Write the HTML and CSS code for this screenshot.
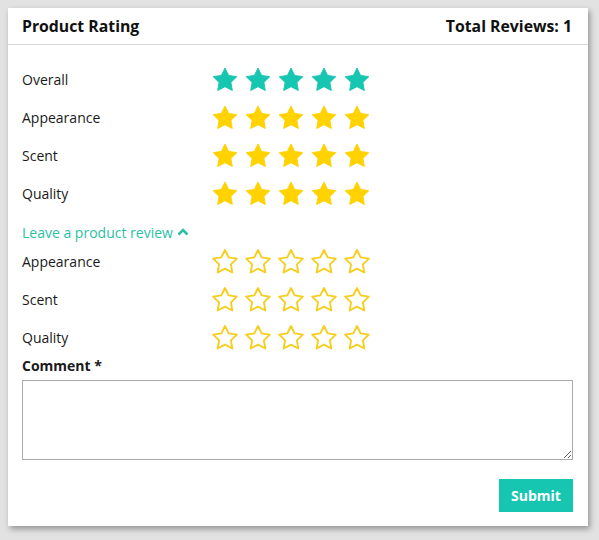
FILE: index.html
```html
<!DOCTYPE html>
<html>
<head>
	<title>Product Rating</title>
	<link rel="stylesheet" href="styles.css">
</head>
<body>
	<svg class="defs" width="0" height="0">
		<symbol id="star" viewBox="1 1.2 22 21">
			<polygon points="12,2 15.09,8.26 22,9.27 17,14.14 18.18,21.02 12,17.77 5.82,21.02 7,14.14 2,9.27 8.91,8.26" />
		</symbol>
	</svg>

	<div class="card">
		<div class="card-header">
			<span>Product Rating</span>
			<span>Total Reviews: 1</span>
		</div>

		<div class="card-body">
			<!-- current ratings -->
			<div class="rating-row">
				<span class="label">Overall</span>
				<span class="stars overall">
					<svg><use href="#star"/></svg><svg><use href="#star"/></svg><svg><use href="#star"/></svg><svg><use href="#star"/></svg><svg><use href="#star"/></svg>
				</span>
			</div>
			<div class="rating-row">
				<span class="label">Appearance</span>
				<span class="stars filled">
					<svg><use href="#star"/></svg><svg><use href="#star"/></svg><svg><use href="#star"/></svg><svg><use href="#star"/></svg><svg><use href="#star"/></svg>
				</span>
			</div>
			<div class="rating-row">
				<span class="label">Scent</span>
				<span class="stars filled">
					<svg><use href="#star"/></svg><svg><use href="#star"/></svg><svg><use href="#star"/></svg><svg><use href="#star"/></svg><svg><use href="#star"/></svg>
				</span>
			</div>
			<div class="rating-row">
				<span class="label">Quality</span>
				<span class="stars filled">
					<svg><use href="#star"/></svg><svg><use href="#star"/></svg><svg><use href="#star"/></svg><svg><use href="#star"/></svg><svg><use href="#star"/></svg>
				</span>
			</div>

			<a class="review-toggle" href="#">Leave a product review
				<svg class="chevron" viewBox="0 0 12 8"><polyline points="1.5,6.5 6,2 10.5,6.5" /></svg>
			</a>

			<!-- review form -->
			<div class="rating-row">
				<span class="label">Appearance</span>
				<span class="stars empty">
					<svg><use href="#star"/></svg><svg><use href="#star"/></svg><svg><use href="#star"/></svg><svg><use href="#star"/></svg><svg><use href="#star"/></svg>
				</span>
			</div>
			<div class="rating-row">
				<span class="label">Scent</span>
				<span class="stars empty">
					<svg><use href="#star"/></svg><svg><use href="#star"/></svg><svg><use href="#star"/></svg><svg><use href="#star"/></svg><svg><use href="#star"/></svg>
				</span>
			</div>
			<div class="rating-row">
				<span class="label">Quality</span>
				<span class="stars empty">
					<svg><use href="#star"/></svg><svg><use href="#star"/></svg><svg><use href="#star"/></svg><svg><use href="#star"/></svg><svg><use href="#star"/></svg>
				</span>
			</div>

			<label class="comment-label" for="comment">Comment *</label>
			<textarea id="comment" class="comment"></textarea>

			<div class="actions">
				<button class="submit">Submit</button>
			</div>
		</div>
	</div>
</body>
</html>
```

FILE: styles.css
```css
body {
	margin: 0;
	padding: 8px 11px 13px 8px;
	background-color: #e2e2e2;
	font-family: "Open Sans", "Noto Sans", sans-serif;
	color: #1a1a1a;
}

.defs {
	position: absolute;
}

.card {
	background: #fff;
	box-shadow: 2px 3px 6px rgba(0, 0, 0, 0.35);
}

.card-header {
	display: flex;
	justify-content: space-between;
	align-items: center;
	height: 36px;
	padding: 0 16px 0 14px;
	border-bottom: 1px solid #d9d9d9;
	font-size: 15.8px;
	font-weight: bold;
	color: #111;
}

.card-body {
	display: flex;
	flex-direction: column;
	padding: 15px 15px 14px 14px;
}

.rating-row {
	display: flex;
	align-items: center;
	height: 38px;
}

.label {
	width: 190px;
	font-size: 14px;
}

.stars {
	display: flex;
	gap: 7px;
}

.stars svg {
	width: 26px;
	height: 25px;
}

.stars.overall svg {
	fill: #17c6b0;
	stroke: #17c6b0;
	stroke-width: 0.8;
	stroke-linejoin: round;
}

.stars.filled svg {
	fill: #ffd200;
	stroke: #ffd200;
	stroke-width: 0.8;
	stroke-linejoin: round;
}

.stars.empty svg {
	fill: none;
	stroke: #f7ce1e;
	stroke-width: 1.6;
	stroke-linejoin: round;
}

.review-toggle {
	display: flex;
	align-items: center;
	gap: 4px;
	height: 20px;
	padding-top: 10px;
	font-size: 14px;
	color: #2cbfa5;
	text-decoration: none;
}

.chevron {
	width: 12px;
	height: 8px;
	fill: none;
	stroke: #2cbfa5;
	stroke-width: 2.6;
}

.comment-label {
	font-size: 14px;
	font-weight: bold;
	line-height: 19px;
}

.comment {
	margin-top: 5px;
	height: 80px;
	box-sizing: border-box;
	border: 1px solid #aaa;
	font-family: inherit;
}

.actions {
	display: flex;
	justify-content: flex-end;
	margin-top: 19px;
}

.submit {
	width: 74px;
	height: 33px;
	border: none;
	background: #17c6b0;
	color: #fff;
	font-family: inherit;
	font-size: 14px;
	font-weight: bold;
}
```
